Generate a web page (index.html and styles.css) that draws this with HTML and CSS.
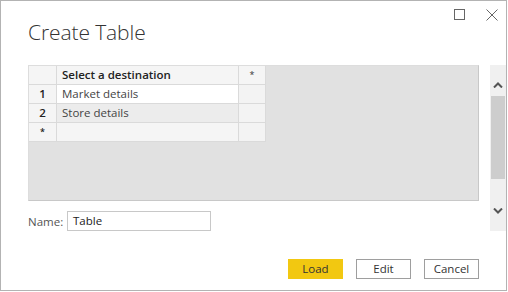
FILE: index.html
```html
<!DOCTYPE html>
<html>
<head>
<meta charset="utf-8">
<link rel="stylesheet" href="styles.css">
</head>
<body>
<div class="window">
  <div class="titlebar">
    <span class="ctl max"><svg width="11" height="11" viewBox="0 0 11 11"><rect x="0.5" y="0.5" width="10" height="10" fill="none" stroke="#666" stroke-width="1"/></svg></span>
    <span class="ctl close"><svg width="12" height="12" viewBox="0 0 12 12"><path d="M0.5 0.5L11.5 11.5M11.5 0.5L0.5 11.5" stroke="#666" stroke-width="1"/></svg></span>
  </div>
  <h1 class="title">Create Table</h1>
  <div class="gridrow">
    <div class="grid">
      <table class="tbl">
        <tr class="hdr"><td class="num"></td><td class="val">Select a destination</td><td class="star">*</td></tr>
        <tr class="r1"><td class="num">1</td><td class="val">Market details</td><td class="star"></td></tr>
        <tr class="r2"><td class="num">2</td><td class="val">Store details</td><td class="star"></td></tr>
        <tr class="r3"><td class="num">*</td><td class="val"></td><td class="star"></td></tr>
      </table>
    </div>
    <div class="scroll">
      <svg class="arr up" width="10" height="6" viewBox="0 0 10 6"><path d="M1 5.5L5 1.5L9 5.5" fill="none" stroke="#555" stroke-width="2"/></svg>
      <div class="thumb"></div>
      <svg class="arr down" width="10" height="6" viewBox="0 0 10 6"><path d="M1 0.5L5 4.5L9 0.5" fill="none" stroke="#555" stroke-width="2"/></svg>
    </div>
  </div>
  <div class="namerow">
    <label class="lbl">Name:</label>
    <div class="input">Table</div>
  </div>
  <div class="buttons">
    <div class="btn primary">Load</div>
    <div class="btn">Edit</div>
    <div class="btn">Cancel</div>
  </div>
</div>
</body>
</html>
```
FILE: styles.css
```css
html, body { margin: 0; padding: 0; background: #fff; }
body { width: 508px; height: 292px; overflow: hidden; font-family: "Open Sans", "Noto Sans", sans-serif; color: #333; }
.window { box-sizing: border-box; width: 507px; height: 291px; border: 1px solid #b3b3b3; position: relative; }
.titlebar { height: 20px; display: flex; justify-content: flex-end; align-items: flex-end; padding-right: 8px; gap: 21px; }
.ctl { display: flex; line-height: 0; }
.max { margin-bottom: 1px; }
.title { margin: 0; padding-left: 27px; font-weight: 300; font-size: 21px; color: #333; line-height: 22px; height: 44px; letter-spacing: -0.1px; }
.gridrow { display: flex; padding-left: 27px; }
.grid { box-sizing: border-box; width: 452px; height: 136px; background: #e1e1e1; border: 1px solid #c8c8c8; border-left-color: #ddd; border-top-color: #ddd; }
.tbl { border-collapse: collapse; font-size: 11.5px; }
.tbl td { border: 1px solid #dadada; height: 18px; padding: 0 5px; line-height: 18px; }
.tbl tr:first-child td { border-top: none; }
.tbl td:first-child { border-left: none; }
.hdr td { background: #f5f5f5; }
.hdr .val { font-weight: 600; color: #222; }
.num { width: 17px; text-align: center; background: #f5f5f5; font-weight: 600; color: #222; }
.val { width: 171px; color: #444; }
.star { width: 16px; background: #f3f3f3; text-align: center; font-size: 9px; }
.r1 .val { background: #fff; }
.r2 .val { background: #ececec; }
.r3 .val { background: #f5f5f5; }
.r1 .star, .r2 .star, .r3 .star { background: #f3f3f3; }
.r3 .num { font-size: 9px; }
.scroll { margin-left: 11px; width: 16px; height: 166px; background: #f0f0f0; display: flex; flex-direction: column; align-items: center; }
.arr.up { margin: 17px 0 8px; }
.arr.down { margin: 29px 0 0; }
.thumb { width: 14px; height: 83px; background: #cdcdcd; }
.namerow { display: flex; align-items: center; padding-left: 27px; margin-top: -20px; font-size: 11.5px; }
.lbl { color: #555; width: 39px; }
.input { box-sizing: border-box; width: 144px; height: 20px; border: 1px solid #c8c8c8; padding-left: 5px; line-height: 18px; color: #222; }
.buttons { display: flex; justify-content: flex-end; gap: 13px; padding-right: 27px; margin-top: 28px; }
.btn { box-sizing: border-box; width: 55px; height: 20px; border: 1px solid #9e9e9e; font-size: 11.5px; text-align: center; line-height: 18px; color: #333; background: #fff; }
.btn.primary { background: #f2c811; border-color: #f2c811; }
```
